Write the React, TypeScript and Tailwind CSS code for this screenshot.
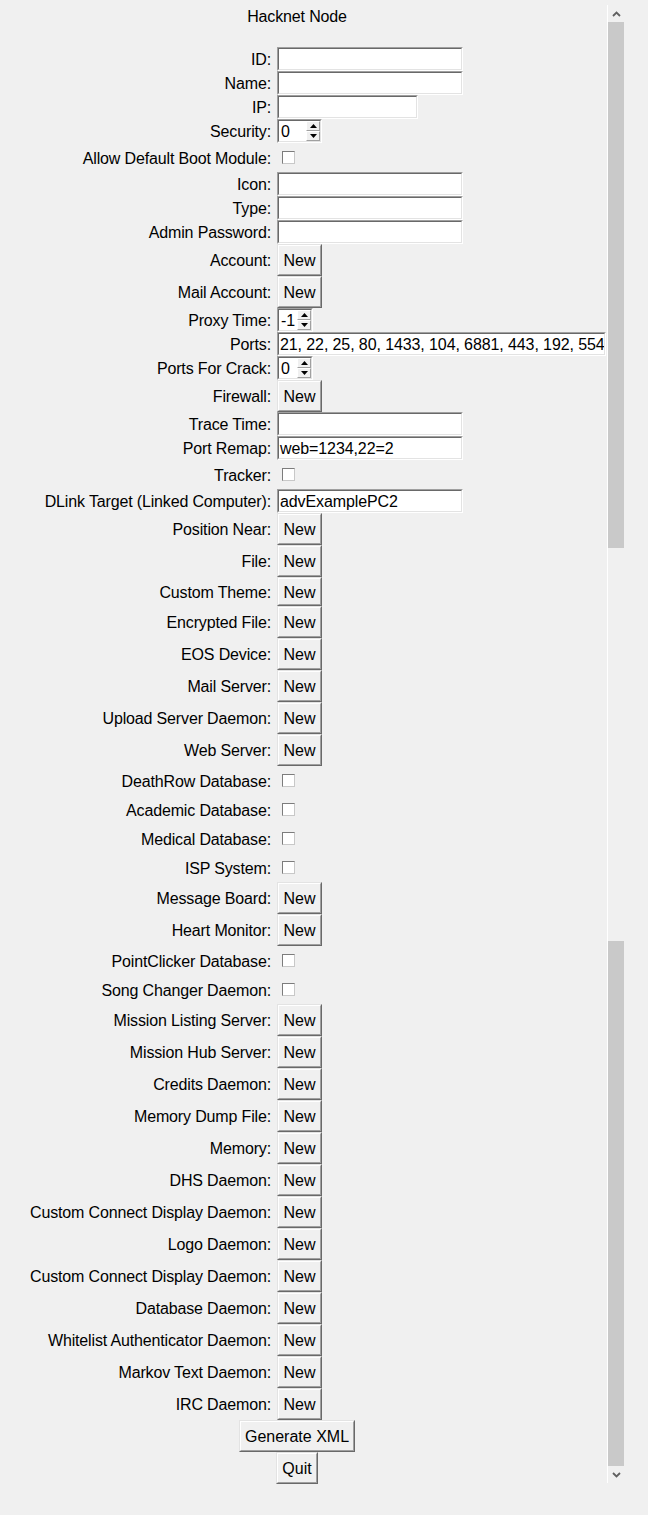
import React from "react";

type Row =
  | { label: string; kind: "entry"; width: number; value?: string }
  | { label: string; kind: "spin"; width: number; value: string }
  | { label: string; kind: "check" }
  | { label: string; kind: "button"; short?: boolean };

const btn = (label: string, short?: boolean): Row => ({ label, kind: "button", short });
const chk = (label: string): Row => ({ label, kind: "check" });
const ent = (label: string, width = 186, value?: string): Row => ({ label, kind: "entry", width, value });

const rows: Row[] = [
  ent("ID"),
  ent("Name"),
  ent("IP", 141),
  { label: "Security", kind: "spin", width: 45, value: "0" },
  chk("Allow Default Boot Module"),
  ent("Icon"),
  ent("Type"),
  ent("Admin Password"),
  btn("Account"),
  btn("Mail Account"),
  { label: "Proxy Time", kind: "spin", width: 36, value: "-1" },
  ent("Ports", 329, "21, 22, 25, 80, 1433, 104, 6881, 443, 192, 554"),
  { label: "Ports For Crack", kind: "spin", width: 36, value: "0" },
  btn("Firewall"),
  ent("Trace Time"),
  ent("Port Remap", 186, "web=1234,22=2"),
  chk("Tracker"),
  ent("DLink Target (Linked Computer)", 186, "advExamplePC2"),
  btn("Position Near"),
  btn("File"),
  btn("Custom Theme", true),
  btn("Encrypted File"),
  btn("EOS Device"),
  btn("Mail Server"),
  btn("Upload Server Daemon"),
  btn("Web Server"),
  chk("DeathRow Database"),
  chk("Academic Database"),
  chk("Medical Database"),
  chk("ISP System"),
  btn("Message Board"),
  btn("Heart Monitor"),
  chk("PointClicker Database"),
  chk("Song Changer Daemon"),
  btn("Mission Listing Server"),
  btn("Mission Hub Server"),
  btn("Credits Daemon"),
  btn("Memory Dump File"),
  btn("Memory"),
  btn("DHS Daemon"),
  btn("Custom Connect Display Daemon"),
  btn("Logo Daemon"),
  btn("Custom Connect Display Daemon"),
  btn("Database Daemon"),
  btn("Whitelist Authenticator Daemon"),
  btn("Markov Text Daemon"),
  btn("IRC Daemon"),
];

// raised Tk-style button
function TkButton({ text, width, height = 32 }: { text: string; width: number; height?: number }) {
  return (
    <div
      className="border-t border-l border-r border-b border-t-[#e3e3e3] border-l-[#e3e3e3] border-r-[#696969] border-b-[#696969]"
      style={{ width, height }}
    >
      <div className="flex h-full items-center justify-center border-t border-l border-r border-b border-t-white border-l-white border-r-[#a0a0a0] border-b-[#a0a0a0] bg-[#f0f0f0] pt-[2px] leading-none">
        {text}
      </div>
    </div>
  );
}

function Sunken({ width, children }: { width: number; children?: React.ReactNode }) {
  return (
    <div
      className="h-[24px] border-t border-l border-r border-b border-t-[#a0a0a0] border-l-[#a0a0a0] border-r-white border-b-white"
      style={{ width }}
    >
      <div className="flex h-full overflow-hidden border-t border-l border-r border-b border-t-[#696969] border-l-[#696969] border-r-[#e3e3e3] border-b-[#e3e3e3] bg-white">
        {children}
      </div>
    </div>
  );
}

function SpinArrow({ up }: { up?: boolean }) {
  return (
    <div className="flex h-[10px] items-center justify-center border-t border-l border-r border-b border-t-white border-l-white border-r-[#a0a0a0] border-b-[#a0a0a0] bg-[#f0f0f0]">
      <svg width="7" height="4" viewBox="0 0 7 4">
        {up ? <polygon points="3.5,0 7,4 0,4" fill="#000" /> : <polygon points="0,0 7,0 3.5,4" fill="#000" />}
      </svg>
    </div>
  );
}

function Widget({ row }: { row: Row }) {
  if (row.kind === "entry") {
    return (
      <Sunken width={row.width}>
        <span className="flex items-center whitespace-nowrap pl-[1px] pt-[2px] leading-none tracking-[-0.1px]">{row.value}</span>
      </Sunken>
    );
  }
  if (row.kind === "spin") {
    return (
      <Sunken width={row.width}>
        <span className="flex flex-1 items-center pl-[2px] pt-[2px] leading-none">{row.value}</span>
        <div className="flex w-[14px] flex-col">
          <SpinArrow up />
          <SpinArrow />
        </div>
      </Sunken>
    );
  }
  if (row.kind === "check") {
    return (
      <div className="ml-[5px] h-[13px] w-[13px] border-t border-l border-r border-b border-t-[#7c7c7c] border-l-[#7c7c7c] border-r-[#c8c8c8] border-b-[#c8c8c8] bg-white" />
    );
  }
  return <TkButton text="New" width={45} height={row.short ? 29 : 32} />;
}

function rowHeight(row: Row) {
  if (row.kind === "check") return "h-[29px]";
  if (row.kind === "button") return row.short ? "h-[29px]" : "h-[32px]";
  return "h-[24px]";
}

function Chevron({ down }: { down?: boolean }) {
  return (
    <svg width="9" height="6" viewBox="0 0 9 6">
      <path d={down ? "M1 1 L4.5 4.5 L8 1" : "M1 5 L4.5 1.5 L8 5"} fill="none" stroke="#606060" strokeWidth="1.8" />
    </svg>
  );
}

export default function App() {
  return (
    <div className="flex min-h-[1515px] w-[648px] bg-[#f0f0f0] font-['Liberation_Sans',Arial,sans-serif] text-[16px] text-black">
      <div className="w-[607px] shrink-0">
        <div className="h-[47px] w-[594px] pt-[8px] text-center leading-[18px] tracking-[-0.15px]">Hacknet Node</div>

        {rows.map((row, i) => (
          <div key={i} className={`flex items-center ${rowHeight(row)}`}>
            <div className="w-[271px] shrink-0 whitespace-nowrap pt-[2px] text-right leading-none tracking-[-0.15px]">{row.label}:</div>
            <div className="ml-[6px] flex items-center">
              <Widget row={row} />
            </div>
          </div>
        ))}

        <div className="flex w-[594px] justify-center">
          <TkButton text="Generate XML" width={116} />
        </div>
        <div className="flex w-[594px] justify-center">
          <TkButton text="Quit" width={42} />
        </div>
      </div>

      {/* scrollbar */}
      <div className="w-[17px] shrink-0 pt-[5px]">
        <div className="flex h-[1478px] flex-col border-l border-white">
          <div className="flex h-[17px] items-center justify-center">
            <Chevron />
          </div>
          <div className="h-[526px] bg-[#c9c9c9]" />
          <div className="h-[393px]" />
          <div className="h-[525px] bg-[#c9c9c9]" />
          <div className="flex h-[17px] items-center justify-center">
            <Chevron down />
          </div>
        </div>
      </div>
    </div>
  );
}
